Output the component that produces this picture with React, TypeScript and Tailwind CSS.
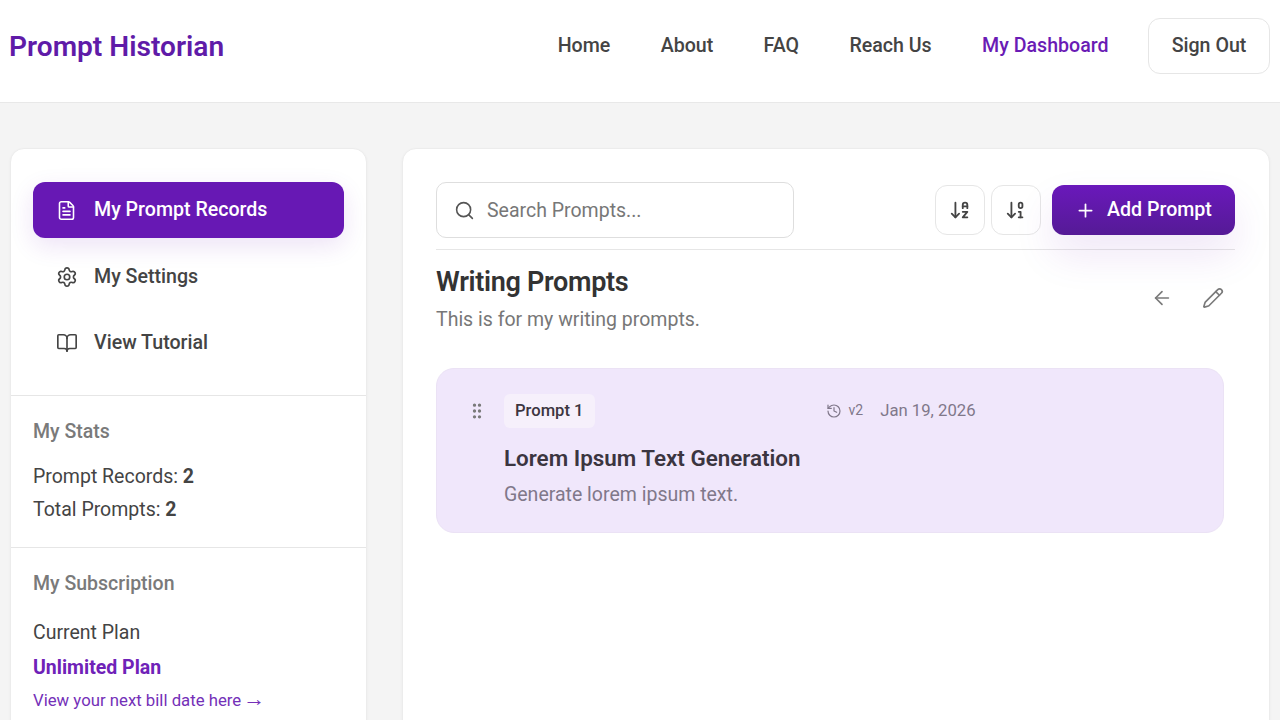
import React from "react";
import { FileText, Settings, BookOpen, Search, ArrowDownAZ, ArrowDown01, Plus, ArrowLeft, Pencil, History, GripVertical } from "lucide-react";

export default function App() {
  return (
    <div className="h-[720px] overflow-hidden bg-[#f4f4f4] font-['Roboto',sans-serif] text-[#333]">
      <header className="h-[103px] bg-white border-b border-[#e8e8e8] flex items-center pl-[9px] pr-[10px] justify-between">
        <div className="text-[28.1px] font-semibold text-[#5f1ba8] leading-none -mt-[8px]">Prompt Historian</div>
        <nav className="flex items-center -mt-[11px] text-[19.6px] font-medium text-[#444]">
          <a className="mr-[50.4px]">Home</a>
          <a className="mr-[50.4px]">About</a>
          <a className="mr-[50.4px]">FAQ</a>
          <a className="mr-[50.4px]">Reach Us</a>
          <a className="mr-[39.5px] text-[#6a1bb5]">My Dashboard</a>
          <button className="w-[122px] h-[56px] rounded-[12px] border border-[#e6e6e6] bg-white text-[#444] font-medium">Sign Out</button>
        </nav>
      </header>
      <div className="flex gap-[35px] pl-[10px] pr-[10px] pt-[45px]">
        <aside className="w-[357px] h-[640px] shrink-0 bg-white rounded-t-[14px] border border-[#ececec] shadow-[0_1px_3px_rgba(0,0,0,0.04)]">
          <div className="px-[22px] pt-[33px] pb-[24px] border-b border-[#e6e6e6] flex flex-col gap-[10px] h-[247px]">
            <div className="h-[56px] rounded-[12px] bg-[#6718b4] text-white flex items-center pl-[23px] gap-[17px] text-[19.6px] font-medium shadow-[0_8px_24px_rgba(103,24,180,0.12)]">
              <FileText size={21} strokeWidth={1.8} />
              <span>My Prompt Records</span>
            </div>
            <div className="h-[56px] pt-[1px] flex items-center pl-[23px] gap-[17px] text-[19.6px] font-medium text-[#444]">
              <Settings size={22} strokeWidth={1.8} />
              <span className="-ml-[1px]">My Settings</span>
            </div>
            <div className="h-[56px] pt-[1px] flex items-center pl-[23px] gap-[17px] text-[19.6px] font-medium text-[#444]">
              <BookOpen size={22} strokeWidth={1.8} />
              <span className="-ml-[1px]">View Tutorial</span>
            </div>
          </div>
          <div className="px-[22px] pt-[22px] h-[152px] border-b border-[#e6e6e6]">
            <div className="text-[19.5px] font-medium text-[#7a7a7a] leading-[28px]">My Stats</div>
            <div className="mt-[14px] text-[19.5px] text-[#444] leading-[33px]">
              <div>Prompt Records: <b className="font-bold">2</b></div>
              <div>Total Prompts: <b className="font-bold">2</b></div>
            </div>
          </div>
          <div className="px-[22px] pt-[22px]">
            <div className="text-[19.5px] font-medium text-[#7a7a7a] leading-[28px]">My Subscription</div>
            <div className="mt-[21px] text-[19.5px] text-[#444] leading-[28px]">Current Plan</div>
            <div className="mt-[7px] text-[19.5px] font-bold text-[#6f22b8] leading-[28px]">Unlimited Plan</div>
            <div className="mt-[4px] flex items-center gap-[2px] text-[16.75px] text-[#7430b8] leading-[28px]">
              <span>View your next bill date here</span>
              <span className="text-[22px] leading-none -mt-[2px]">→</span>
            </div>
          </div>
        </aside>
        <main className="flex-1 h-[640px] bg-white rounded-t-[14px] border border-[#ececec] shadow-[0_1px_3px_rgba(0,0,0,0.04)] px-[33px] pt-[33px]">
          <div className="w-[799px]">
            <div className="flex items-center h-[56px]">
              <div className="w-[358px] h-[56px] rounded-[10px] border border-[#dedede] flex items-center pl-[17px] gap-[12px] text-[19.5px] text-[#777]">
                <Search size={21} strokeWidth={1.8} className="text-[#555]" />
                <span className="pt-[1px]">Search Prompts...</span>
              </div>
              <div className="ml-auto flex items-center">
                <button className="w-[50px] h-[50px] rounded-[12px] border border-[#e6e6e6] flex items-center justify-center text-[#444]"><ArrowDownAZ size={22} strokeWidth={2} /></button>
                <button className="ml-[6px] w-[50px] h-[50px] rounded-[12px] border border-[#e6e6e6] flex items-center justify-center text-[#444]"><ArrowDown01 size={22} strokeWidth={2} /></button>
                <button className="ml-[11px] w-[183px] h-[50px] rounded-[12px] bg-gradient-to-b from-[#6a18bb] to-[#551a96] text-white flex items-center pl-[23px] gap-[11px] text-[19.6px] font-medium shadow-[0_20px_40px_rgba(103,24,180,0.10)]">
                  <Plus size={21} strokeWidth={2} />
                  <span>Add Prompt</span>
                </button>
              </div>
            </div>
            <div className="mt-[11px] border-t border-[#e6e6e6]" />
            <div className="flex items-start justify-between mt-[14px]">
              <div>
                <h1 className="text-[27px] font-semibold text-[#333] leading-[36px] tracking-[-0.3px]">Writing Prompts</h1>
                <p className="text-[19.5px] text-[#777] leading-[28px] mt-[6px]">This is for my writing prompts.</p>
              </div>
              <div className="flex items-center gap-[29px] mt-[23px] mr-[11px] text-[#7a7a7a]">
                <ArrowLeft size={22} strokeWidth={1.8} />
                <Pencil size={22} strokeWidth={1.8} />
              </div>
            </div>
            <div className="mt-[34px] w-[788px] h-[165px] rounded-[18px] bg-[#f0e7fb] border border-[#ebe2f5] flex pl-[30px] pt-[25px]">
              <GripVertical size={20} strokeWidth={2} className="text-[#7a7a7a] mt-[7px] shrink-0" />
              <div className="ml-[17px] flex-1">
                <div className="flex items-center h-[34px]">
                  <span className="h-[34px] px-[11px] rounded-[6px] bg-[#f6f0fb] flex items-center text-[16.6px] font-medium text-[#3c3540]">Prompt 1</span>
                  <div className="ml-[231px] flex items-center text-[#80788a]">
                    <History size={16} strokeWidth={1.8} />
                    <span className="ml-[7px] text-[14px]">v2</span>
                    <span className="ml-[17px] text-[16.7px]">Jan 19, 2026</span>
                  </div>
                </div>
                <div className="mt-[15px] text-[22.4px] font-semibold text-[#3b3540] leading-[30px]">Lorem Ipsum Text Generation</div>
                <div className="mt-[9px] text-[19.5px] text-[#80788a] leading-[26px]">Generate lorem ipsum text.</div>
              </div>
            </div>
          </div>
        </main>
      </div>
    </div>
  );
}
